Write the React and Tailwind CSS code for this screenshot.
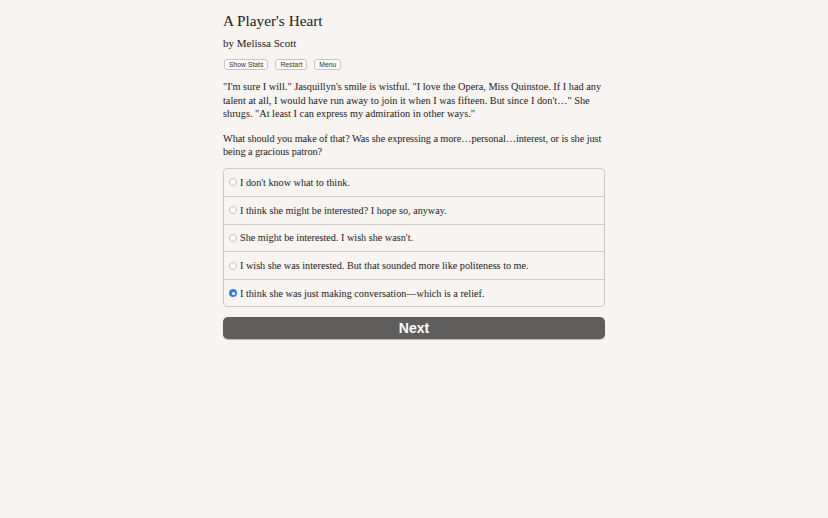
import React from "react";

const options = [
  "I don't know what to think.",
  "I think she might be interested? I hope so, anyway.",
  "She might be interested. I wish she wasn't.",
  "I wish she was interested. But that sounded more like politeness to me.",
  "I think she was just making conversation\u2014which is a relief.",
];

export default function App() {
  const serif = { fontFamily: '"Liberation Serif", "DejaVu Serif", serif' };
  return (
    <div className="min-h-[518px] w-full bg-[#f7f4f1] text-[#222]" style={serif}>
      <div className="mx-auto w-[382px] pt-[11px]">
        <h1 className="text-[15.3px] leading-[20px] font-normal text-[#222]">A Player's Heart</h1>
        <div className="mt-[5px] text-[11px] leading-[14px]">by Melissa Scott</div>
        <div className="mt-[9px] flex gap-[7px] pl-[1px]" style={{ fontFamily: '"Liberation Sans", Arial, sans-serif' }}>
          {["Show Stats", "Restart", "Menu"].map((b) => (
            <button
              key={b}
              className="h-[11px] rounded-[3px] border border-[#c9c6c2] bg-[#fbfaf8] px-[4px] text-[6.8px] leading-[9px] text-[#333]"
            >
              {b}
            </button>
          ))}
        </div>
        <p className="mt-[10px] text-[10.3px] leading-[13.5px]">
          "I'm sure I will." Jasquillyn's smile is wistful. "I love the Opera, Miss Quinstoe. If I had any talent at all, I would have run away to join it when I was fifteen. But since I don't…" She shrugs. "At least I can express my admiration in other ways."
        </p>
        <p className="mt-[11px] text-[10.3px] leading-[13.5px] tracking-[-0.08px]">
          What should you make of that? Was she expressing a more…personal…interest, or is she just being a gracious patron?
        </p>
        <div className="mt-[9px] overflow-hidden rounded-[4px] border border-[#cdcac6] bg-[#f7f4f1]">
          {options.map((o, i) => (
            <div
              key={i}
              className={`flex h-[27.6px] items-center pl-[5px] text-[10.2px] ${i > 0 ? "border-t border-[#cdcac6]" : ""}`}
            >
              {i === 4 ? (
                <span className="mr-[3px] flex h-[8px] w-[8px] items-center justify-center rounded-full bg-[#3d7bd9]">
                  <span className="h-[3px] w-[3px] rounded-full bg-white" />
                </span>
              ) : (
                <span className="mr-[3px] h-[8px] w-[8px] rounded-full border border-[#c4c1bd] bg-white" />
              )}
              <span>{o}</span>
            </div>
          ))}
        </div>
        <button
          className="mt-[10px] h-[22px] w-full rounded-[5px] bg-[#5f5e5c] text-[14px] font-bold text-white shadow-[0_1px_1px_rgba(0,0,0,0.25)]"
          style={{ fontFamily: '"Liberation Sans", Arial, sans-serif' }}
        >
          Next
        </button>
      </div>
    </div>
  );
}
